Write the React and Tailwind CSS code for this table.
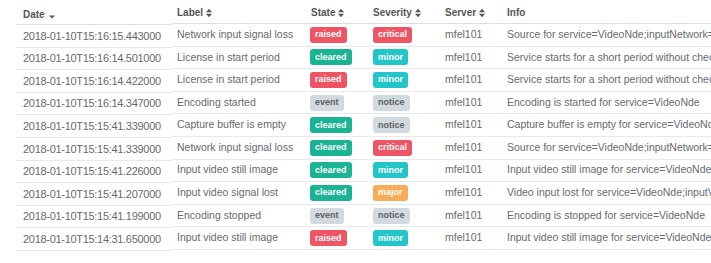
import React from 'react';

const rows = [
  { date: '2018-01-10T15:16:15.443000', label: 'Network input signal loss', state: 'raised', severity: 'critical', info: 'Source for service=VideoNde;inputNetwork=NetworkInput1 lost' },
  { date: '2018-01-10T15:16:14.501000', label: 'License in start period', state: 'cleared', severity: 'minor', info: 'Service starts for a short period without checking license' },
  { date: '2018-01-10T15:16:14.422000', label: 'License in start period', state: 'raised', severity: 'minor', info: 'Service starts for a short period without checking license' },
  { date: '2018-01-10T15:16:14.347000', label: 'Encoding started', state: 'event', severity: 'notice', info: 'Encoding is started for service=VideoNde' },
  { date: '2018-01-10T15:15:41.339000', label: 'Capture buffer is empty', state: 'cleared', severity: 'notice', info: 'Capture buffer is empty for service=VideoNde;input=VideoIn' },
  { date: '2018-01-10T15:15:41.339000', label: 'Network input signal loss', state: 'cleared', severity: 'critical', info: 'Source for service=VideoNde;inputNetwork=NetworkInput1 lost' },
  { date: '2018-01-10T15:15:41.226000', label: 'Input video still image', state: 'cleared', severity: 'minor', info: 'Input video still image for service=VideoNde;inputVideo=1' },
  { date: '2018-01-10T15:15:41.207000', label: 'Input video signal lost', state: 'cleared', severity: 'major', info: 'Video input lost for service=VideoNde;inputVideo=VideoIn1' },
  { date: '2018-01-10T15:15:41.199000', label: 'Encoding stopped', state: 'event', severity: 'notice', info: 'Encoding is stopped for service=VideoNde' },
  { date: '2018-01-10T15:14:31.650000', label: 'Input video still image', state: 'raised', severity: 'minor', info: 'Input video still image for service=VideoNde;inputVideo=1' },
];

const badgeColors = {
  raised: 'bg-[#ed5565] text-white',
  critical: 'bg-[#ed5565] text-white',
  cleared: 'bg-[#1ab394] text-white',
  minor: 'bg-[#23c6c8] text-white',
  major: 'bg-[#f8ac59] text-white',
  event: 'bg-[#d1dade] text-[#5e5e5e]',
  notice: 'bg-[#d1dade] text-[#5e5e5e]',
};

function Badge({ name }) {
  return (
    <span className={`inline-flex items-center h-[16px] px-[5px] rounded-[3px] text-[9px] font-bold leading-none ${badgeColors[name]}`}>
      {name}
    </span>
  );
}

function SortIcon() {
  return (
    <svg width="6" height="10" viewBox="0 0 6 10" className="ml-[3px] fill-[#555]">
      <path d="M0 4.2 L3 0.8 L6 4.2 Z" />
      <path d="M0 5.8 L6 5.8 L3 9.2 Z" />
    </svg>
  );
}

function SortDesc() {
  return (
    <svg width="6" height="4" viewBox="0 0 6 4" className="ml-[4px] mt-[5px] fill-[#555]">
      <path d="M0 0.5 L6 0.5 L3 3.5 Z" />
    </svg>
  );
}

export default function App() {
  return (
    <div className="w-[711px] h-[263px] bg-white overflow-hidden flex pl-4 font-['Liberation_Sans',Arial,sans-serif] text-[#676a6c]">
      {/* fixed date column */}
      <div className="w-[156px] shrink-0">
        <div className="h-[25px] flex items-center pt-[4px] pl-[7px] border-b border-[#dddddd] text-[10px] font-bold text-[#555]">
          Date
          <SortDesc />
        </div>
        {rows.map((r, i) => (
          <div key={i} className="h-[22.6px] flex items-center pl-[7px] border-b border-[#e7eaec] text-[11px] tracking-[-0.3px] whitespace-nowrap">
            {r.date}
          </div>
        ))}
      </div>

      {/* scrolling part */}
      <div className="w-[700px] shrink-0">
        <div className="h-[24px] flex items-center pt-[2px] border-b border-[#dddddd] text-[10px] font-bold text-[#555]">
          <div className="w-[134px] pl-[5px] flex items-center">Label<SortIcon /></div>
          <div className="w-[62px] pl-[5px] flex items-center">State<SortIcon /></div>
          <div className="w-[72px] pl-[5px] flex items-center">Severity<SortIcon /></div>
          <div className="w-[62px] pl-[5px] flex items-center">Server<SortIcon /></div>
          <div className="flex-1 pl-[5px]">Info</div>
        </div>
        {rows.map((r, i) => (
          <div key={i} className="h-[22.6px] flex items-center border-b border-[#e7eaec] text-[10.5px] whitespace-nowrap">
            <div className="w-[134px] pl-[5px]">{r.label}</div>
            <div className="w-[62px] pl-[4px] flex"><Badge name={r.state} /></div>
            <div className="w-[72px] pl-[5px] flex"><Badge name={r.severity} /></div>
            <div className="w-[62px] pl-[5px]">mfel101</div>
            <div className="flex-1 pl-[5px] overflow-hidden">{r.info}</div>
          </div>
        ))}
      </div>
    </div>
  );
}
